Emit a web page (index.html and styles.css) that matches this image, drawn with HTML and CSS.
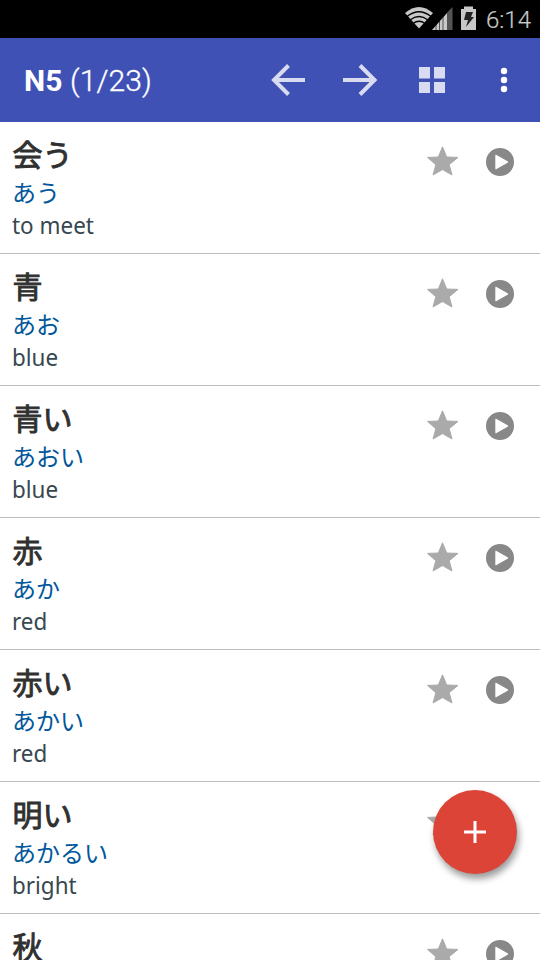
FILE: index.html
```html
<!DOCTYPE html>
<html lang="ja">
<head>
<meta charset="utf-8">
<title>N5</title>
<link rel="stylesheet" href="styles.css">
</head>
<body>
<svg class="defs" aria-hidden="true">
<symbol id="star" viewBox="0 0 32 30"><path stroke-width="1" stroke-linejoin="round" d="M15.5 .8l4.2 10.2L31 11.4l-8.800 7.300L25 29l-9.500-5.400L6 29l2.800-10.300L.5 11.400 11.300 11z"/></symbol>
<symbol id="play" viewBox="0 0 28 28"><path fill-rule="evenodd" d="M14 0a14 14 0 1 0 0 28a14 14 0 1 0 0-28zM9.300 7.500v13q0 1.300 1.200.6L21.600 14.800q1-.8 0-1.500L10.500 6.900q-1.200-.7-1.200.6z"/></symbol>
</svg>
<div class="status">
<svg class="status-icons" viewBox="0 0 75 38">
<path fill="#545454" d="M47.500 7v23H42V12.500z"/>
<path fill="#c8c8c8" d="M0 13Q14 1 28 13L14 28.500z"/>
<path fill="none" stroke="#000" stroke-width="1.300" d="M2 16.500Q14 7 26 16.500M5 20Q14 13 23 20M8 23.500Q14 19 20 23.500"/>
<path fill="#c8c8c8" d="M27 30L42 13V30z"/>
<path stroke="#000" stroke-width=".6" d="M31 24v6M34.500 21v9M38 17v13"/>
<path fill="#c8c8c8" d="M56 9h3V6.500h9V9h3v21H56z"/><path fill="#222" d="M61 12h7l-2 5h3l-8 10 2-7h-4z"/>
</svg><span class="clock">6:14</span></div>
<header class="bar"><h1><b>N5</b> (1/23)</h1>
<svg class="actions" viewBox="0 0 270 84"><g fill="none" stroke="#d9dcf0" stroke-width="4"><path d="M35 42H4M18.500 27.500L4 42l14.500 14.500M73 42h31M90 27.500L104.500 42 90 56.500"/></g><path fill="#d9dcf0" d="M149 29h11v11.500h-11zM164 29h11v11.500h-11zM149 44h11v11h-11zM164 44h11v11h-11z"/><g fill="#fff"><circle cx="234" cy="33" r="3.200"/><circle cx="234" cy="42" r="3.200"/><circle cx="234" cy="51" r="3.200"/></g></svg></header>
<main class="list">
<article class="row"><div class="words"><h2>会う</h2><p class="kana">あう</p><p class="meaning">to meet</p></div><svg class="star"><use href="#star"/></svg><svg class="play"><use href="#play"/></svg></article>
<article class="row"><div class="words"><h2>青</h2><p class="kana">あお</p><p class="meaning">blue</p></div><svg class="star"><use href="#star"/></svg><svg class="play"><use href="#play"/></svg></article>
<article class="row"><div class="words"><h2>青い</h2><p class="kana">あおい</p><p class="meaning">blue</p></div><svg class="star"><use href="#star"/></svg><svg class="play"><use href="#play"/></svg></article>
<article class="row"><div class="words"><h2>赤</h2><p class="kana">あか</p><p class="meaning">red</p></div><svg class="star"><use href="#star"/></svg><svg class="play"><use href="#play"/></svg></article>
<article class="row"><div class="words"><h2>赤い</h2><p class="kana">あかい</p><p class="meaning">red</p></div><svg class="star"><use href="#star"/></svg><svg class="play"><use href="#play"/></svg></article>
<article class="row"><div class="words"><h2>明い</h2><p class="kana">あかるい</p><p class="meaning">bright</p></div><svg class="star"><use href="#star"/></svg><svg class="play"><use href="#play"/></svg></article>
<article class="row"><div class="words"><h2>秋</h2></div><svg class="star"><use href="#star"/></svg><svg class="play"><use href="#play"/></svg></article>
</main>
<button class="fab" aria-label="Add"><svg viewBox="0 0 22 22"><path d="M11 0v22M0 11h22" stroke="#fff" stroke-width="3"/></svg></button>
</body>
</html>
```
FILE: styles.css
```css
* { box-sizing: border-box; margin: 0; padding: 0; }
body { width: 540px; height: 960px; overflow: hidden; background: #fff; display: flex; flex-direction: column; font-family: Roboto, "Noto Sans CJK JP", sans-serif; }
.defs { position: absolute; width: 0; height: 0; }
.status { height: 38px; flex: none; background: #000; display: flex; justify-content: flex-end; align-items: center; padding-right: 9px; }
.status-icons { width: 75px; height: 38px; margin-right: 6px; }
.clock { color: #c8c8c8; font-size: 24px; font-weight: 300; line-height: 38px; padding-top: 2px; -webkit-text-stroke: .2px #c8c8c8; }
.bar { height: 84px; flex: none; background: #3f51b5; display: flex; align-items: center; justify-content: space-between; padding-left: 24px; }
.bar h1 { color: #fff; font-size: 30px; font-weight: 300; letter-spacing: .1px; -webkit-text-stroke: .35px #fff; }
.bar b { font-weight: 700; -webkit-text-stroke: 0; }
.actions { width: 270px; height: 84px; }
.list { flex: 1; overflow: hidden; }
.row { height: 132px; display: flex; align-items: flex-start; padding: 12px 26px 0 12px; border-bottom: 1px solid #bdbdbd; }
.words { flex: 1; }
.row h2 { font-size: 30px; line-height: 43px; font-weight: 400; color: #303030; -webkit-text-stroke: .9px #303030; padding-left: .5px; }
.kana { font-size: 24px; line-height: 33px; margin-top: 1px; color: #01579b; }
.meaning { font-family: "Noto Sans", sans-serif; font-size: 24px; line-height: 31px; margin-top: -2px; color: #37474f; transform: scaleX(.935); transform-origin: left; }
.star { width: 32px; height: 30px; margin: 12px 26.5px 0 0; fill: #aaa; stroke: #aaa; }
.play { width: 28px; height: 28px; margin: 14px .5px 0 0; fill: #888; }
.fab { position: absolute; left: 433px; top: 790px; width: 84px; height: 84px; border: 0; border-radius: 50%; background: #db4437; box-shadow: 2px 5px 7px rgba(0,0,0,.4); display: flex; align-items: center; justify-content: center; }
.fab svg { width: 22px; height: 22px; }
```
